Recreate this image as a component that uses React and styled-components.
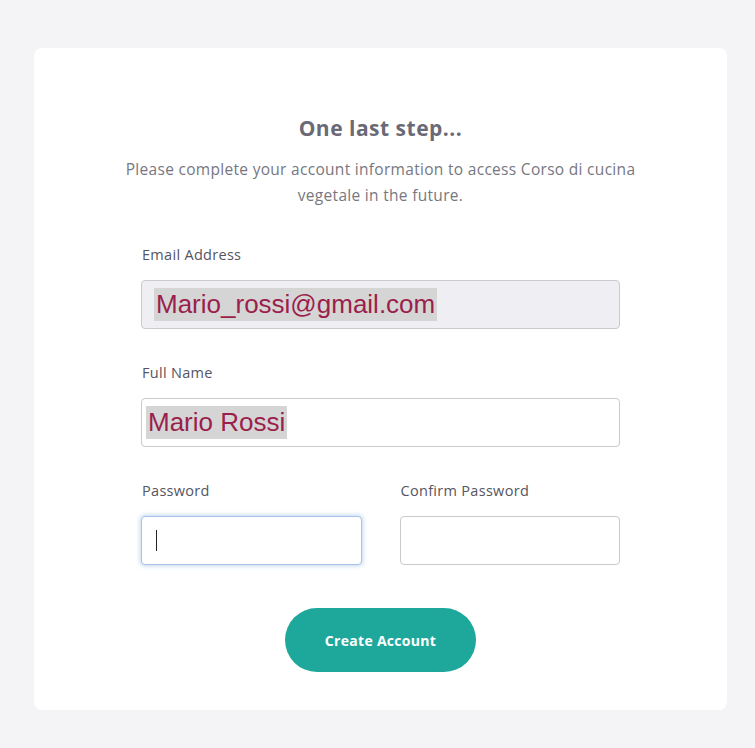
import React from 'react';
import styled, { createGlobalStyle } from 'styled-components';

const GlobalStyle = createGlobalStyle`
  html, body {
    margin: 0;
    padding: 0;
    background: #f4f4f6;
  }
  body {
    font-family: "Open Sans", Lato, sans-serif;
  }
  * { box-sizing: border-box; }
`;

const Page = styled.div`
  min-height: 748px;
  padding: 48px 28px 38px 34px;
`;

const Card = styled.div`
  background: #ffffff;
  border-radius: 8px;
  height: 662px;
  padding: 66px 0 0;
  display: flex;
  flex-direction: column;
  align-items: center;
`;

const Title = styled.h1`
  margin: 0;
  font-size: 21px;
  font-weight: 700;
  letter-spacing: 0.5px;
  color: #6a6a76;
  line-height: 28px;
  text-align: center;
`;

const Subtitle = styled.p`
  margin: 14px 0 0;
  width: 540px;
  font-size: 15.5px;
  letter-spacing: 0.3px;
  line-height: 26px;
  color: #77777f;
  text-align: center;
`;

const Form = styled.form`
  width: 479px;
  margin-top: 38px;
  display: flex;
  flex-direction: column;
  gap: 35px;
`;

const Row = styled.div`
  display: grid;
  grid-template-columns: 1fr 1fr;
  column-gap: 38px;
`;

const Field = styled.div`
  display: flex;
  flex-direction: column;
`;

const Label = styled.label`
  font-size: 14.5px;
  letter-spacing: 0.3px;
  color: #55555f;
  line-height: 18px;
  margin-bottom: 16px;
  padding-left: 1px;
`;

const InputBox = styled.div`
  height: 49px;
  border: 1px solid ${p => (p.$focused ? '#a9c3e6' : '#cacace')};
  border-radius: 4px;
  background: ${p => (p.$readOnly ? '#eeeef3' : '#ffffff')};
  box-shadow: ${p => (p.$focused ? '0 0 4px 1px rgba(120, 165, 225, 0.45)' : 'none')};
  display: flex;
  align-items: center;
  padding-left: ${p => p.$pad || 12}px;
`;

const Filled = styled.span`
  font-family: "Liberation Sans", Arial, sans-serif;
  font-size: 26px;
  line-height: 33px;
  color: #9b1f4c;
  background: #d5d5d5;
  padding: 0 2px;
`;

const Caret = styled.span`
  width: 1px;
  height: 21px;
  background: #222;
  margin-left: 2px;
`;

const Button = styled.button`
  margin-top: 8px;
  align-self: center;
  width: 191px;
  height: 64px;
  border: none;
  border-radius: 32px;
  background: #1ea89b;
  color: #ffffff;
  font-family: "Open Sans", Lato, sans-serif;
  font-weight: 700;
  font-size: 14px;
  letter-spacing: 0.3px;
  cursor: pointer;
`;

export default function App() {
  return (
    <>
      <GlobalStyle />
      <Page>
        <Card>
          <Title>One last step...</Title>
          <Subtitle>
            Please complete your account information to access Corso di cucina vegetale in the future.
          </Subtitle>
          <Form onSubmit={e => e.preventDefault()}>
            <Field>
              <Label>Email Address</Label>
              <InputBox $readOnly $pad={12}>
                <Filled>Mario_rossi@gmail.com</Filled>
              </InputBox>
            </Field>
            <Field>
              <Label>Full Name</Label>
              <InputBox $pad={4}>
                <Filled>Mario Rossi</Filled>
              </InputBox>
            </Field>
            <Row>
              <Field>
                <Label>Password</Label>
                <InputBox $focused $pad={12}>
                  <Caret />
                </InputBox>
              </Field>
              <Field>
                <Label>Confirm Password</Label>
                <InputBox />
              </Field>
            </Row>
            <Button type="button">Create Account</Button>
          </Form>
        </Card>
      </Page>
    </>
  );
}
